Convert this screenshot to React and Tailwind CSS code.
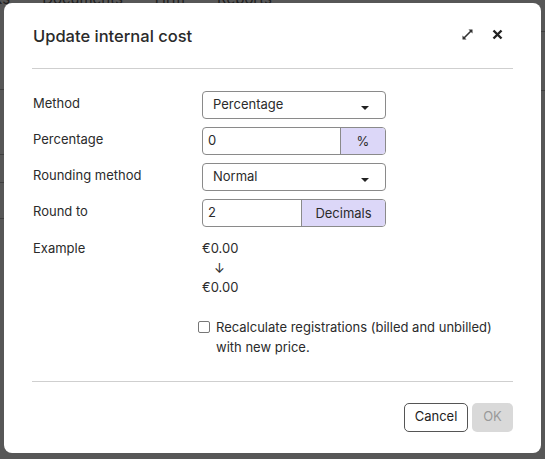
import React from 'react';

const Caret = () => (
  <svg width="8" height="4" viewBox="0 0 8 4" className="mt-[5px]">
    <path d="M0 0h8L4 4z" fill="#222" />
  </svg>
);

const SelectBox = ({ value }) => (
  <div className="flex h-[28px] w-[184px] items-center justify-between rounded-[4px] border border-[#8a8a8a] bg-white pl-[10px] pr-[16px]">
    <span>{value}</span>
    <Caret />
  </div>
);

const AddonInput = ({ value, addon, addonW }) => (
  <div className="flex h-[28px] w-[184px] overflow-hidden rounded-[4px] border border-[#8a8a8a] bg-white">
    <div className="flex flex-1 items-center pl-[5px]">{value}</div>
    <div className={`flex items-center justify-center border-l border-[#8a8a8a] bg-[#dcd7f8] pt-[1px] ${addonW}`}>{addon}</div>
  </div>
);

const Row = ({ label, children }) => (
  <div className="flex items-center">
    <div className="w-[169px] self-start pt-[3px]">{label}</div>
    {children}
  </div>
);

export default function App() {
  return (
    <div className="relative h-[459px] w-[545px] overflow-hidden bg-[#575757] font-['Inter',sans-serif] text-[13px] text-[#2b2b2b]">
      {/* dimmed page behind */}
      <div className="absolute -top-[12px] left-0 flex gap-[32px] text-[15px] text-[#1e1e1e]">
        <span className="-ml-[6px]">ks</span>
        <span>Documents</span>
        <span>Hrm</span>
        <span>Reports</span>
      </div>
      <div className="absolute left-0 top-[89px] h-px w-[4px] bg-[#3f3f3f]" />
      <div className="absolute left-0 top-[154px] h-px w-[4px] bg-[#3f3f3f]" />
      <div className="absolute left-0 top-[182px] h-px w-[4px] bg-[#3f3f3f]" />
      <div className="absolute left-0 top-[218px] h-px w-[4px] bg-[#3f3f3f]" />
      <div className="absolute right-0 top-[31px] h-px w-[4px] bg-[#3f3f3f]" />
      <div className="absolute right-0 top-[90px] h-px w-[4px] bg-[#3f3f3f]" />

      {/* dialog */}
      <div className="absolute left-[4px] top-[3px] flex h-[450px] w-[537px] flex-col rounded-[8px] bg-white px-[28px]">
        <div className="flex h-[66px] items-center justify-between border-b border-[#cfcfcf] pt-[2px]">
          <h2 className="pl-[1px] text-[16.5px] font-medium text-[#2a2a2a]">Update internal cost</h2>
          <div className="flex items-center gap-[19px] pr-[10px] pb-[4px]">
            <svg width="11" height="11" viewBox="0 0 11 11">
              <path d="M6.5 0.5h4v4z M4.5 10.5h-4v-4z" fill="#333" />
              <path d="M9 2L2 9" stroke="#333" strokeWidth="1.6" />
            </svg>
            <svg width="11" height="11" viewBox="0 0 11 11">
              <path d="M1.5 1.5l8 8M9.5 1.5l-8 8" stroke="#222" strokeWidth="2.4" />
            </svg>
          </div>
        </div>

        <div className="flex flex-col gap-[8px] pt-[22px] pl-[1px]">
          <Row label="Method">
            <SelectBox value="Percentage" />
          </Row>
          <Row label="Percentage">
            <AddonInput value="0" addon="%" addonW="w-[45px]" />
          </Row>
          <Row label="Rounding method">
            <SelectBox value="Normal" />
          </Row>
          <Row label="Round to">
            <AddonInput value="2" addon="Decimals" addonW="w-[84px]" />
          </Row>
        </div>

        <div className="flex pt-[12px] pl-[1px] leading-[19.5px]">
          <div className="w-[169px]">Example</div>
          <div className="flex flex-col">
            <span>€0.00</span>
            <span className="pl-[12px]">↓</span>
            <span>€0.00</span>
          </div>
        </div>

        <div className="flex items-start pt-[19px] pl-[166px] leading-[20px]">
          <span className="mt-[4px] mr-[6px] h-[12px] w-[12px] shrink-0 rounded-[2px] border border-[#777]" />
          <span>
            Recalculate registrations (billed and unbilled)
            <br />
            with new price.
          </span>
        </div>

        <div className="mt-[24px] border-t border-[#cfcfcf]" />

        <div className="flex justify-end gap-[4px] pt-[21px]">
          <button className="h-[29px] w-[64px] rounded-[5px] border border-[#555] bg-white text-[13px] text-[#222]">Cancel</button>
          <button className="h-[29px] w-[41px] rounded-[5px] bg-[#d9d9d9] text-[13px] text-[#9a9a9a]">OK</button>
        </div>
      </div>
    </div>
  );
}
